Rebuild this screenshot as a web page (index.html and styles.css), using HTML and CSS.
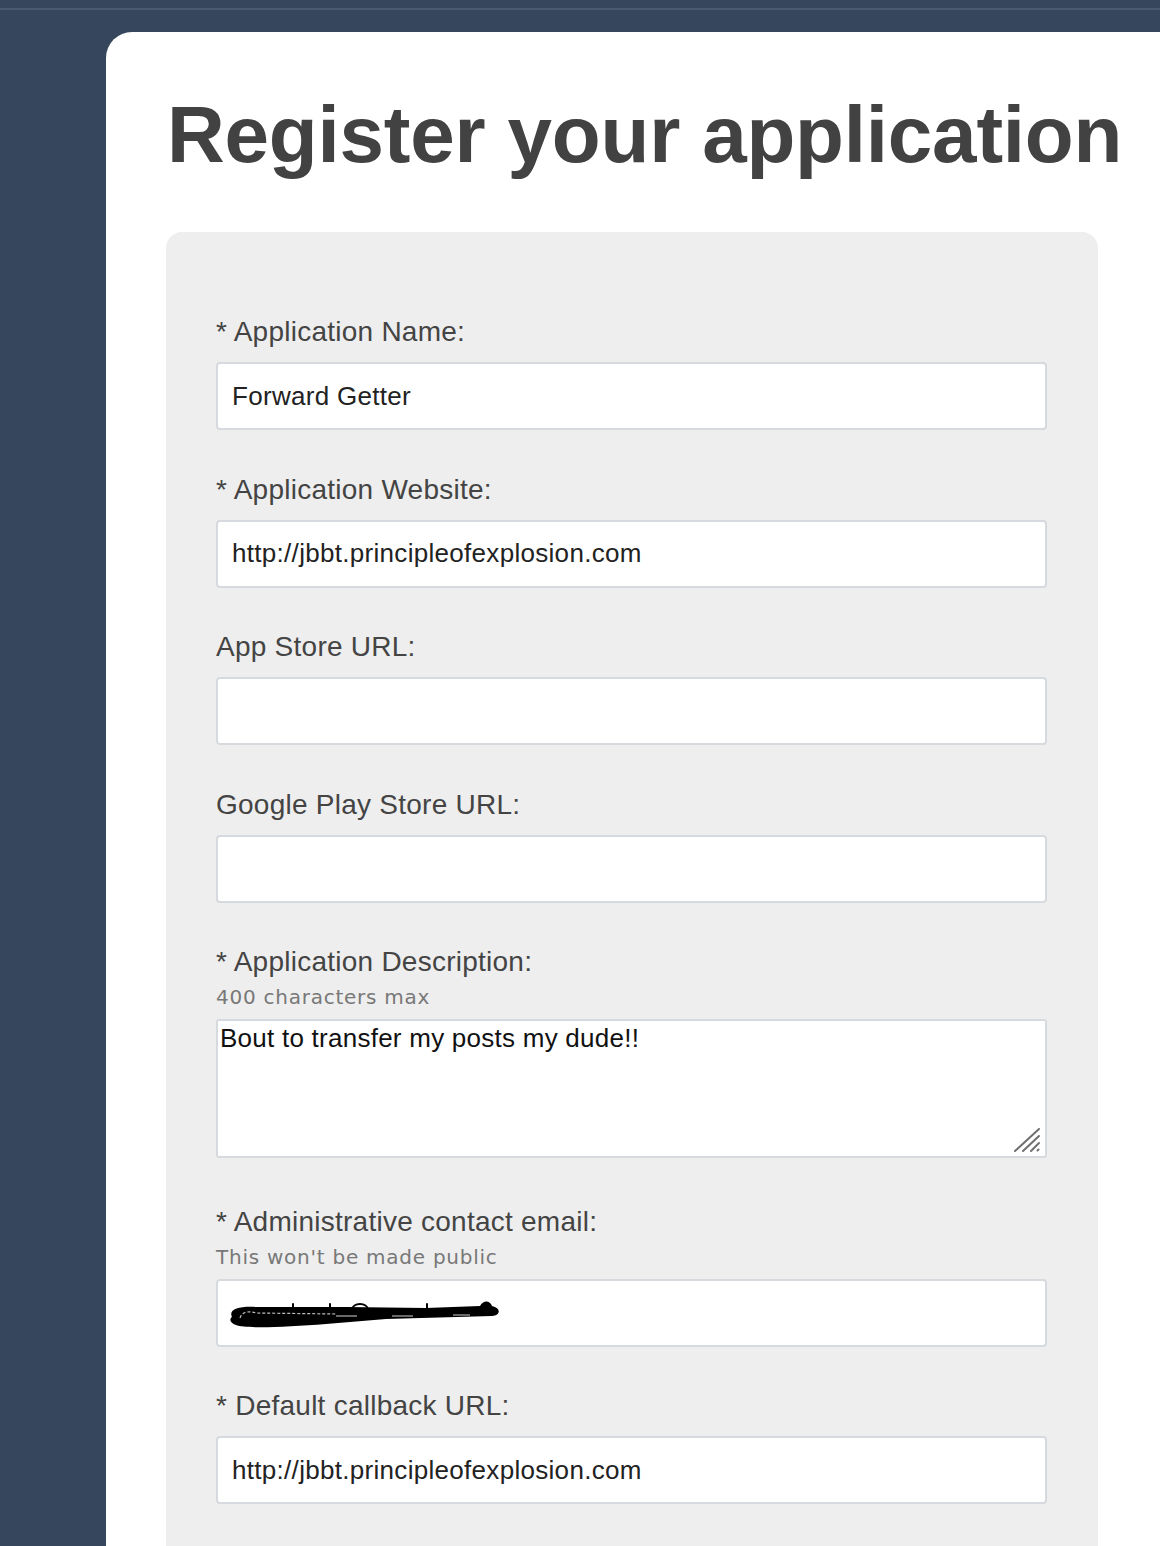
FILE: index.html
```html
<!DOCTYPE html>
<html lang="en">
<head>
<meta charset="utf-8">
<title>Register your application</title>
<link rel="stylesheet" href="styles.css">
</head>
<body>
<div class="topbar"></div>
<main class="card">
  <h1 class="title">Register your application</h1>
  <form class="form-box">
    <div class="field">
      <label class="label" for="name">* Application Name:</label>
      <input class="input" id="name" type="text" value="Forward Getter">
    </div>
    <div class="field">
      <label class="label" for="site">* Application Website:</label>
      <input class="input" id="site" type="text" value="http://jbbt.principleofexplosion.com">
    </div>
    <div class="field">
      <label class="label" for="appstore">App Store URL:</label>
      <input class="input" id="appstore" type="text" value="">
    </div>
    <div class="field">
      <label class="label" for="play">Google Play Store URL:</label>
      <input class="input" id="play" type="text" value="">
    </div>
    <div class="field">
      <label class="label label-tight" for="desc">* Application Description:</label>
      <div class="hint">400 characters max</div>
      <div class="textarea-wrap">
        <textarea class="textarea" id="desc">Bout to transfer my posts my dude!!</textarea>
        <svg class="grip" width="30" height="26" viewBox="0 0 30 26" aria-hidden="true">
          <g stroke="#6f6f6f" stroke-width="2" stroke-linecap="round">
            <line x1="2" y1="23" x2="26" y2="1"/>
            <line x1="10" y1="23" x2="26" y2="8"/>
            <line x1="18" y1="23" x2="26" y2="15"/>
            <line x1="24.5" y1="22.5" x2="25.5" y2="21.5"/>
          </g>
        </svg>
      </div>
    </div>
    <div class="field">
      <label class="label label-tight" for="email">* Administrative contact email:</label>
      <div class="hint">This won't be made public</div>
      <div class="input-wrap">
        <input class="input" id="email" type="text" value="">
        <svg class="scribble" width="280" height="36" viewBox="0 0 280 36" aria-hidden="true">
          <g stroke="#000" stroke-width="2" stroke-linecap="round" fill="none">
            <path d="M67 16 L67 8"/>
            <path d="M104 16 L104 8"/>
            <path d="M201 15 L201 8"/>
            <path d="M126 14 C 126 6, 142 6, 142 14"/>
          </g>
          <path d="M6 21 C 2 13, 14 10, 30 11 L 120 11 L 200 12 L 254 10 C 257 4, 264 4, 266 10 C 275 12, 275 19, 266 20 L 160 23 L 100 28 C 60 31, 20 33, 10 29 C 4 27, 3 23, 6 21 Z" fill="#000"/>
          <path d="M14 22 C 16 15, 24 15, 30 17 L 110 18" stroke="#ffffff" stroke-width="1.2" stroke-dasharray="3 2" fill="none" opacity="0.75"/>
          <path d="M110 20 L 131 20 M 166 20 L 187 20 M 227 19 L 244 19" stroke="#ffffff" stroke-width="1.6" fill="none" opacity="0.55"/>
        </svg>
      </div>
    </div>
    <div class="field">
      <label class="label" for="callback">* Default callback URL:</label>
      <input class="input" id="callback" type="text" value="http://jbbt.principleofexplosion.com">
    </div>
  </form>
</main>
</body>
</html>
```

FILE: styles.css
```css
html, body {
  margin: 0;
  padding: 0;
}

body {
  background: #36465d;
  font-family: "Liberation Sans", Arial, sans-serif;
  height: 1546px;
  overflow: hidden;
}

.topbar {
  height: 8px;
  border-bottom: 2px solid #4b5a6f;
}

.card {
  display: block;
  margin: 22px 0 0 106px;
  padding: 57px 62px 0 60px;
  background: #ffffff;
  border-radius: 26px 0 0 0;
  min-height: 1600px;
}

.title {
  margin: 0 0 51px 1px;
  font-size: 80px;
  line-height: 92px;
  font-weight: 700;
  color: #424242;
  letter-spacing: -0.2px;
  white-space: nowrap;
}

.form-box {
  background: #eeeeee;
  border-radius: 16px;
  padding: 84px 51px 80px 50px;
  display: flex;
  flex-direction: column;
  gap: 43.5px;
}

.field {
  display: flex;
  flex-direction: column;
}

.label {
  font-size: 28px;
  line-height: 32px;
  letter-spacing: 0.25px;
  color: #444444;
  margin-bottom: 14px;
}

.label-tight {
  margin-bottom: 0;
}

.hint {
  font-family: "DejaVu Sans", "Liberation Sans", sans-serif;
  font-size: 20px;
  line-height: 24px;
  color: #787878;
  letter-spacing: 0.75px;
  margin: 7px 0 10px;
}

.input {
  box-sizing: border-box;
  width: 100%;
  height: 68px;
  margin: 0;
  padding: 0 14px;
  border: 2px solid #d6d9dd;
  border-radius: 4px;
  background: #ffffff;
  font-family: "Liberation Sans", Arial, sans-serif;
  font-size: 26px;
  letter-spacing: 0.3px;
  color: #222222;
  outline: none;
}

.input-wrap,
.textarea-wrap {
  position: relative;
}

.textarea-wrap {
  margin-bottom: 4px;
}

.textarea {
  box-sizing: border-box;
  display: block;
  width: 100%;
  height: 139px;
  margin: 0;
  padding: 0 2px;
  border: 2px solid #d6d9dd;
  border-radius: 3px;
  background: #ffffff;
  font-family: "Liberation Sans", Arial, sans-serif;
  font-size: 26px;
  letter-spacing: 0.25px;
  line-height: 34px;
  color: #111111;
  resize: none;
  outline: none;
}

.grip {
  position: absolute;
  right: 4px;
  bottom: 4px;
}

.scribble {
  position: absolute;
  left: 10px;
  top: 17px;
}
```
